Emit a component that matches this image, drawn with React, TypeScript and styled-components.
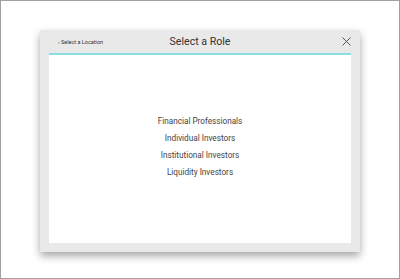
import React from 'react';
import styled, { createGlobalStyle } from 'styled-components';

const GlobalStyle = createGlobalStyle`
  html, body {
    margin: 0;
    padding: 0;
    background: #ffffff;
  }
  body {
    font-family: Roboto, 'Liberation Sans', sans-serif;
    color: #333333;
  }
`;

const roles = [
  'Financial Professionals',
  'Individual Investors',
  'Institutional Investors',
  'Liquidity Investors',
];

const Frame = styled.div`
  box-sizing: border-box;
  width: 400px;
  height: 279px;
  border: 1px solid #a0a0a0;
  padding: 29px 39px 0 39px;
`;

const Modal = styled.div`
  box-sizing: border-box;
  width: 320px;
  height: 222px;
  background: #e9e9e9;
  padding: 0 9px 9px;
  display: flex;
  flex-direction: column;
  box-shadow: 0 4px 8px rgba(0, 0, 0, 0.35);
`;

const Header = styled.div`
  height: 23px;
  display: grid;
  grid-template-columns: 1fr auto 1fr;
  align-items: center;
  border-bottom: 2px solid #8adde0;
`;

const BackLink = styled.a`
  justify-self: start;
  padding-left: 9px;
  font-size: 5.5px;
  color: #333333;
  text-decoration: none;
  cursor: pointer;
`;

const Title = styled.h1`
  margin: 0;
  font-size: 10.6px;
  font-weight: 400;
  color: #333333;
`;

const CloseButton = styled.button`
  justify-self: end;
  background: none;
  border: none;
  padding: 0;
  width: 9px;
  height: 9px;
  display: flex;
  cursor: pointer;
`;

const Body = styled.div`
  flex: 1;
  background: #ffffff;
  display: flex;
  flex-direction: column;
  align-items: center;
  padding-top: 58px;
`;

const RoleItem = styled.a`
  font-size: 8.2px;
  line-height: 17px;
  color: #444444;
  cursor: pointer;
`;

export default function App() {
  return (
    <>
      <GlobalStyle />
      <Frame>
        <Modal>
          <Header>
            <BackLink>‹ Select a Location</BackLink>
            <Title>Select a Role</Title>
            <CloseButton aria-label="Close">
              <svg width="9" height="9" viewBox="0 0 9 9">
                <path d="M0.5 0.5 L8.5 8.5 M8.5 0.5 L0.5 8.5" stroke="#555" strokeWidth="1" />
              </svg>
            </CloseButton>
          </Header>
          <Body>
            {roles.map((role) => (
              <RoleItem key={role}>{role}</RoleItem>
            ))}
          </Body>
        </Modal>
      </Frame>
    </>
  );
}
